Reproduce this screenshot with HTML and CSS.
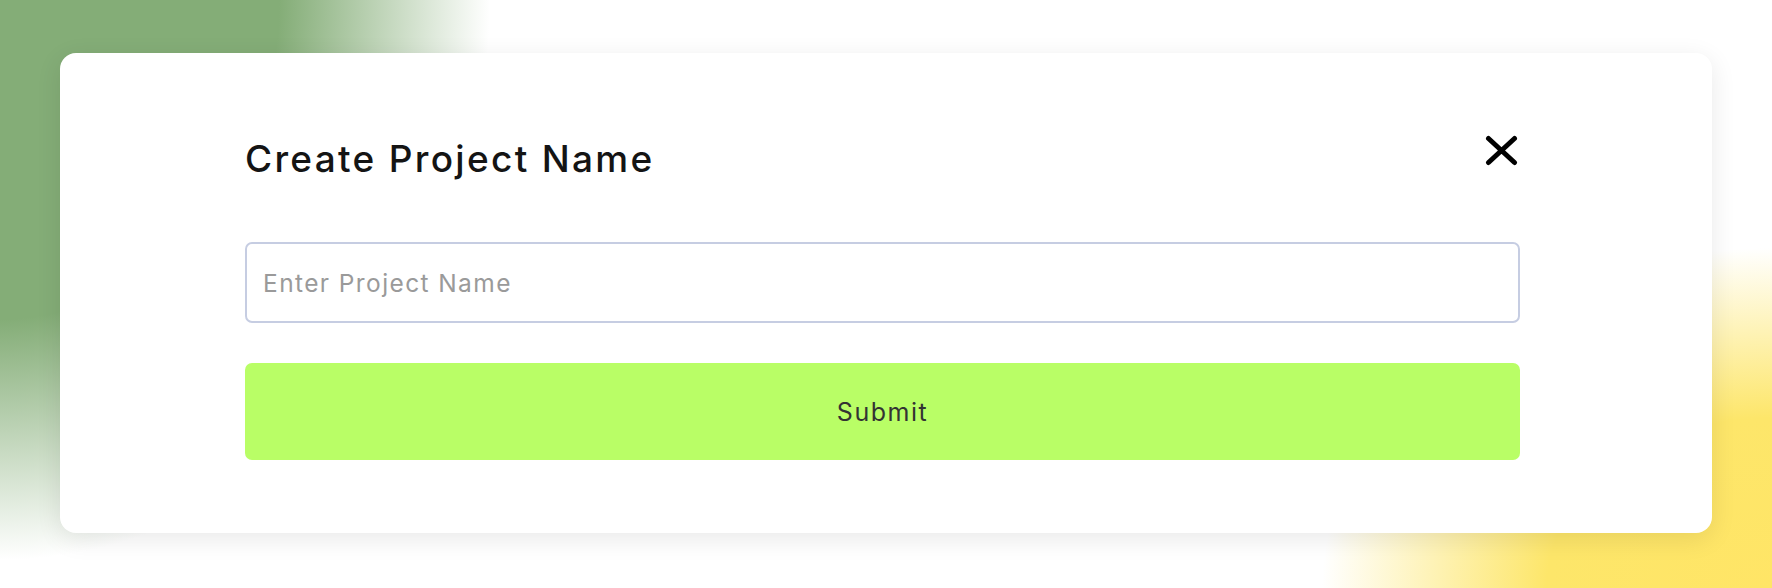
FILE: index.html
```html
<!DOCTYPE html>
<html lang="en">
<head>
<meta charset="utf-8">
<title>Create Project Name</title>
<link rel="stylesheet" href="styles.css">
</head>
<body>
<div class="page">
  <div class="card">
    <div class="form">
      <div class="head">
        <h1 class="title">Create Project Name</h1>
        <button class="close" aria-label="Close">
          <svg width="33" height="31" viewBox="0 0 33 31"><path d="M3.5 3.5 L29.5 27.5 M29.5 3.5 L3.5 27.5" stroke="#000" stroke-width="5" stroke-linecap="round" fill="none"/></svg>
        </button>
      </div>
      <input class="field" type="text" placeholder="Enter Project Name">
      <button class="submit">Submit</button>
    </div>
  </div>
</div>
</body>
</html>
```
FILE: styles.css
```css
* { box-sizing: border-box; }
html, body { margin: 0; padding: 0; }
body {
  font-family: "Inter", "Open Sans", sans-serif;
  background: #fff;
}
.page {
  width: 1772px;
  height: 588px;
  padding: 53px 60px 55px 60px;
  background:
    radial-gradient(ellipse 450px 340px at 100% 100%, #ffe566 0%, #fde66a 50%, rgba(253,230,110,0) 100%),
    radial-gradient(ellipse 490px 560px at 0 0, #84ad77 0%, #84ad77 57%, rgba(132,173,119,0) 100%),
    #fff;
}
.card {
  height: 480px;
  background: #fff;
  border-radius: 16px;
  box-shadow: 0 6px 26px rgba(0, 0, 0, 0.09);
  padding: 79px 192px 0 185px;
}
.form {
  display: flex;
  flex-direction: column;
}
.head {
  display: flex;
  justify-content: space-between;
  align-items: flex-start;
  height: 110px;
}
.title {
  margin: 3px 0 0;
  font-size: 37px;
  font-weight: 500;
  line-height: 48px;
  color: #141414;
  letter-spacing: 2.3px;
}
.close {
  border: 0;
  background: none;
  padding: 0;
  margin-top: 3px;
  margin-right: 2px;
  width: 33px;
  height: 31px;
  cursor: pointer;
}
.close svg { display: block; }
.field {
  height: 81px;
  width: 100%;
  border: 2px solid #c6cde2;
  border-radius: 7px;
  padding: 0 16px;
  font-family: inherit;
  font-size: 24.5px;
  letter-spacing: 1.4px;
  color: #333;
  outline: none;
}
.field::placeholder { color: #9a9a9a; }
.submit {
  margin-top: 40px;
  height: 97px;
  width: 100%;
  border: 0;
  border-radius: 7px;
  background: #b9fe66;
  font-family: inherit;
  font-size: 25px;
  letter-spacing: 1.5px;
  color: #333;
  cursor: pointer;
}
```
